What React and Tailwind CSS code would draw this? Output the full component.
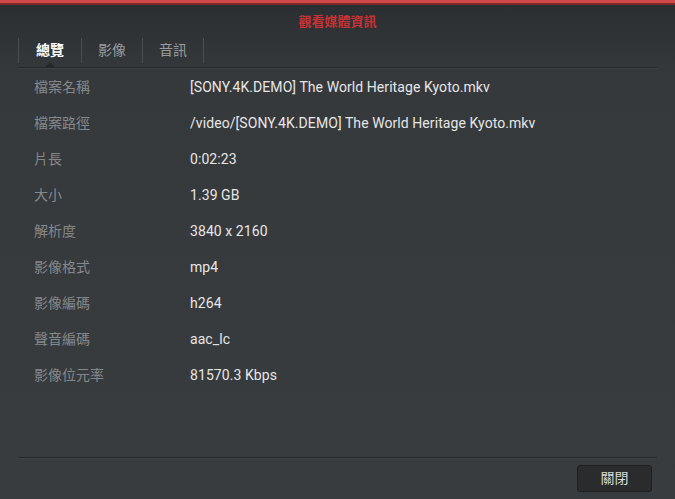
import React from 'react';

const rows = [
  ['檔案名稱', '[SONY.4K.DEMO] The World Heritage Kyoto.mkv'],
  ['檔案路徑', '/video/[SONY.4K.DEMO] The World Heritage Kyoto.mkv'],
  ['片長', '0:02:23'],
  ['大小', '1.39 GB'],
  ['解析度', '3840 x 2160'],
  ['影像格式', 'mp4'],
  ['影像編碼', 'h264'],
  ['聲音編碼', 'aac_lc'],
  ['影像位元率', '81570.3 Kbps'],
];

const font = { fontFamily: 'Roboto, "Noto Sans CJK TC", sans-serif' };

export default function App() {
  return (
    <div
      className="w-[675px] h-[499px] flex flex-col bg-gradient-to-b from-[#2b2e31] via-[#36393c] via-[15%] to-[#393c3f]"
      style={font}
    >
      {/* top red bar */}
      <div className="h-[3px] bg-[#d0484a]" />
      <div className="h-[2px] bg-[#7a2a2c]" />

      <div className="h-[32px] flex items-center justify-center">
        <span className="text-[13px] font-bold text-[#c83234] leading-none">觀看媒體資訊</span>
      </div>

      {/* tabs */}
      <div className="mx-[18px] h-[31px] flex items-start border-b border-[#25282b] shadow-[0_1px_0_#3f4245]">
        <div className="w-px h-[25px] mt-[1px] bg-[#4a4d50]" />
        {['總覽', '影像', '音訊'].map((t, i) => (
          <React.Fragment key={t}>
            <div
              className={`relative h-[30px] flex items-center justify-center ${i === 0 ? 'w-[62px]' : 'w-[60px]'} ${
                i === 0 ? 'text-white font-bold' : 'text-[#9a9c9e]'
              }`}
            >
              <span className="text-[14px] leading-none -mt-[5px]">{t}</span>
              {i === 0 && (
                <span className="absolute bottom-[-1px] left-1/2 -translate-x-1/2 w-0 h-0 border-l-[6px] border-r-[6px] border-b-[6px] border-l-transparent border-r-transparent border-b-[#25282b]" />
              )}
            </div>
            <div className="w-px h-[25px] mt-[1px] bg-[#4a4d50]" />
          </React.Fragment>
        ))}
      </div>

      {/* info rows */}
      <div className="mt-[1px] flex flex-col">
        {rows.map(([k, v]) => (
          <div key={k} className="h-[36px] flex items-center">
            <div className="w-[190px] pl-[34px] text-[14px] text-[#85888b]">{k}</div>
            <div className="text-[14px] tracking-[0.07px] text-[#e6e6e6]">{v}</div>
          </div>
        ))}
      </div>

      <div className="flex-1" />

      {/* footer */}
      <div className="mx-[18px] border-t border-[#25282b] shadow-[0_1px_0_#3f4245]" />
      <div className="h-[41px] flex items-center justify-end pr-[23px]">
        <button className="w-[75px] h-[27px] rounded-[3px] bg-[#2a2b2d] border border-[#1e1f21] text-[14px] text-[#d8d8d8]">
          關閉
        </button>
      </div>
    </div>
  );
}
